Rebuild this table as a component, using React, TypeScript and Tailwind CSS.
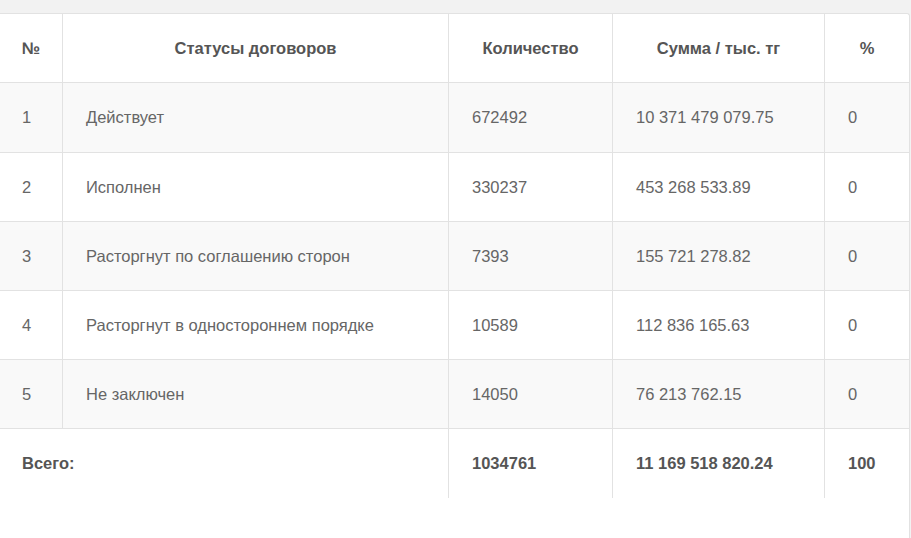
import React from "react";

const rows = [
  ["1", "Действует", "672492", "10 371 479 079.75", "0"],
  ["2", "Исполнен", "330237", "453 268 533.89", "0"],
  ["3", "Расторгнут по соглашению сторон", "7393", "155 721 278.82", "0"],
  ["4", "Расторгнут в одностороннем порядке", "10589", "112 836 165.63", "0"],
  ["5", "Не заключен", "14050", "76 213 762.15", "0"],
];

export default function App() {
  return (
    <div
      className="w-[911px] h-[538px] bg-[#f2f2f2] pt-[13px] overflow-hidden"
      style={{ fontFamily: '"Liberation Sans", Arial, sans-serif' }}
    >
      <div className="w-[910px] h-[525px] bg-white border-t border-r border-[#e2e2e2] rounded-tr-[3px]">
        <div className="grid grid-cols-[63px_386px_164px_212px_84px] text-[16.5px]">
          {/* header */}
          <div className="h-[69px] flex items-center justify-center font-bold text-[#555] border-r border-b border-[#e2e2e2]">№</div>
          <div className="h-[69px] flex items-center justify-center font-bold text-[#555] border-r border-b border-[#e2e2e2]">Статусы договоров</div>
          <div className="h-[69px] flex items-center justify-center font-bold text-[#555] border-r border-b border-[#e2e2e2]">Количество</div>
          <div className="h-[69px] flex items-center justify-center font-bold text-[#555] border-r border-b border-[#e2e2e2]">Сумма / тыс. тг</div>
          <div className="h-[69px] flex items-center justify-center font-bold text-[#555] border-b border-[#e2e2e2]">%</div>
          {rows.map((r, i) => {
            const bg = i % 2 === 0 ? "bg-[#f9f9f9]" : "bg-white";
            const h = i === 0 ? "h-[70px]" : "h-[69px]";
            return (
              <React.Fragment key={i}>
                <div className={`${h} flex items-center pl-[22px] text-[#666] border-r border-b border-[#e2e2e2] ${bg}`}>{r[0]}</div>
                <div className={`${h} flex items-center pl-[23px] text-[#666] border-r border-b border-[#e2e2e2] ${bg}`}>{r[1]}</div>
                <div className={`${h} flex items-center pl-[23px] text-[#666] border-r border-b border-[#e2e2e2] ${bg}`}>{r[2]}</div>
                <div className={`${h} flex items-center pl-[23px] text-[#666] border-r border-b border-[#e2e2e2] ${bg}`}>{r[3]}</div>
                <div className={`${h} flex items-center pl-[23px] text-[#666] border-b border-[#e2e2e2] ${bg}`}>{r[4]}</div>
              </React.Fragment>
            );
          })}
          {/* footer */}
          <div className="col-span-2 h-[69px] flex items-center pl-[22px] font-bold text-[#555] border-r border-[#e2e2e2]">Всего:</div>
          <div className="h-[69px] flex items-center pl-[23px] font-bold text-[#555] border-r border-[#e2e2e2]">1034761</div>
          <div className="h-[69px] flex items-center pl-[23px] font-bold text-[#555] border-r border-[#e2e2e2]">11 169 518 820.24</div>
          <div className="h-[69px] flex items-center pl-[23px] font-bold text-[#555]">100</div>
        </div>
      </div>
    </div>
  );
}
